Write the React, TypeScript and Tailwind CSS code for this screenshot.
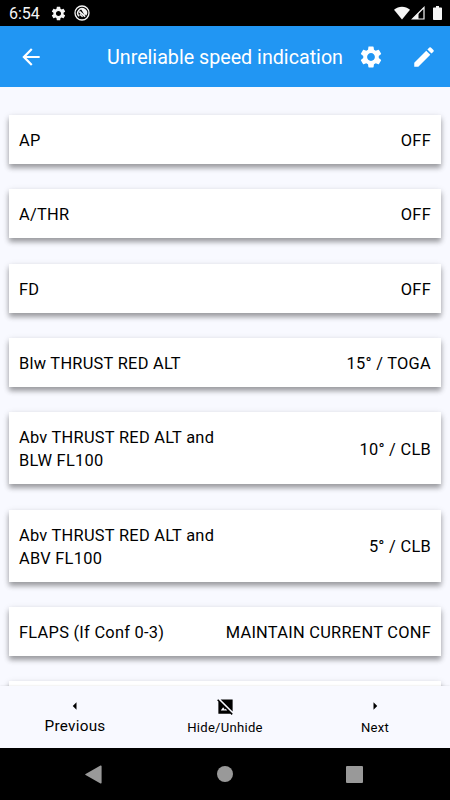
import type { ReactNode } from "react";
import { MdArrowBack, MdArrowLeft, MdArrowRight, MdEdit, MdSettings } from "react-icons/md";

const items = [
    { label: "AP", value: "OFF" },
    { label: "A/THR", value: "OFF" },
    { label: "FD", value: "OFF" },
    { label: "Blw THRUST RED ALT", value: "15° / TOGA" },
    { label: "Abv THRUST RED ALT and BLW FL100", value: "10° / CLB" },
    { label: "Abv THRUST RED ALT and ABV FL100", value: "5° / CLB" },
    { label: "FLAPS (If Conf 0-3)", value: "MAINTAIN CURRENT CONF" },
];

function StatusBar() {
    return (
        <div className="flex h-[26px] shrink-0 items-center bg-black pl-[9px] pr-2 text-[#f5f5f5]">
            <span className="w-[31px] pt-[2px] text-[16px] leading-[24px]">6:54</span>
            <MdSettings className="ml-[10px] size-[17px]" />
            <svg className="ml-[7px] size-4" viewBox="0 0 16 16" fill="none" stroke="currentColor">
                <circle cx="8" cy="8" r="7" strokeWidth="1.3" />
                <path d="M5.2 11.2A4.3 4.3 0 1 1 11.8 10.2" strokeWidth="1.5" />
                <path d="M6.8 3.8A4.3 4.3 0 0 1 12.3 8.2L10.8 10.5Z" fill="currentColor" stroke="none" />
                <path d="M5.3 6.5 11.2 11.6" strokeWidth="1.8" />
                <path d="M5.8 9.3 8.6 11.8" strokeWidth="1.3" />
            </svg>
            <svg className="ml-auto h-[14px] w-4" viewBox="0 0 16 14" fill="currentColor">
                <path d="M8 13.5 0 3.7C4.6-.4 11.4-.4 16 3.7Z" />
            </svg>
            <svg className="ml-[1px] h-[14px] w-[14px]" viewBox="0 0 14 14">
                <path d="M13 1.5V13H1.5Z" fill="none" stroke="currentColor" strokeWidth="1.2" />
                <path d="M7.5 6.8V13H1.5Z" fill="currentColor" />
            </svg>
            <svg className="ml-2 h-[14px] w-[9px]" viewBox="0 0 9 14" fill="currentColor">
                <path d="M3 0h3v1.5h2.2c.5 0 .8.3.8.8v10.9c0 .5-.3.8-.8.8H.8c-.5 0-.8-.3-.8-.8V2.3c0-.5.3-.8.8-.8H3Z" />
            </svg>
        </div>
    );
}

function HideImageIcon() {
    return (
        <svg className="size-[19px]" viewBox="0 0 24 24" fill="currentColor">
            <path d="M2.81 2.81 1.39 4.22 3 5.83V21h15.17l1.61 1.61 1.41-1.41L2.81 2.81zM6 17l3-4 2.25 3 .82-1.1 2.1 2.1H6zM21 18.17V3H5.83L21 18.17z" />
        </svg>
    );
}

function Card({ children }: { children?: ReactNode }) {
    return (
        <div className="flex min-h-[49px] shrink-0 items-center justify-between bg-white px-[10px] pt-[13.8px] pb-[12.2px] text-[16.4px] leading-[23px] tracking-[0.27px] text-black shadow-[0_4px_5px_rgba(0,0,0,0.3),0_2px_7px_rgba(0,0,0,0.14)]">
            {children}
        </div>
    );
}

function NavItem({ icon, children }: { icon: ReactNode; children: ReactNode }) {
    return (
        <button className="flex w-[150px] flex-col items-center pt-[11px]">
            <span className="flex h-[18px] items-center">{icon}</span>
            {children}
        </button>
    );
}

export default function App() {
    return (
        <div className="flex h-[800px] w-[450px] flex-col overflow-hidden bg-[#f8f9ff] font-[Roboto,sans-serif]">
            <StatusBar />

            <header className="flex h-[61px] shrink-0 items-center bg-[#2196f3] pl-[18px] pr-[13px] text-white">
                <MdArrowBack className="size-[26px]" />
                <h1 className="ml-auto pt-[2px] text-[19.7px]">Unreliable speed indication</h1>
                <MdSettings className="ml-[15px] size-[26px]" />
                <MdEdit className="ml-[27px] size-[26px]" />
            </header>

            <main className="flex min-h-0 flex-1 flex-col gap-[25.35px] overflow-hidden px-[9px] pt-[28.1px]">
                {items.map((item) => (
                    <Card key={item.label}>
                        <span className="max-w-[205px]">{item.label}</span>
                        <span className="whitespace-nowrap">{item.value}</span>
                    </Card>
                ))}
                <Card />
            </main>

            <nav className="flex h-[62px] shrink-0 bg-[#f8f9ff] text-black shadow-[0_0_2px_rgba(0,0,0,0.12)]">
                <NavItem icon={<MdArrowLeft className="size-[18px]" />}>
                    <span className="text-[15.3px] leading-[22px] tracking-[0.27px]">Previous</span>
                </NavItem>
                <NavItem icon={<HideImageIcon />}>
                    <span className="pt-[2px] text-[13.1px] leading-[22px] tracking-[0.27px]">Hide/Unhide</span>
                </NavItem>
                <NavItem icon={<MdArrowRight className="size-[18px]" />}>
                    <span className="pt-[2px] text-[13.1px] leading-[22px] tracking-[0.27px]">Next</span>
                </NavItem>
            </nav>

            <div className="flex h-[52px] shrink-0 items-center bg-black pl-[85px] text-[#999]">
                <svg className="h-[19px] w-[17px]" viewBox="0 0 17 19" fill="currentColor">
                    <path d="M.6 8.9 15.5.6c.6-.3 1.1 0 1.1.6v16.6c0 .6-.5.9-1.1.6L.6 10.1c-.5-.3-.5-.9 0-1.2Z" />
                </svg>
                <div className="ml-[115px] size-4 rounded-full bg-[#999]" />
                <div className="ml-[113px] size-[17px] rounded-[1px] bg-[#999]" />
            </div>
        </div>
    );
}
